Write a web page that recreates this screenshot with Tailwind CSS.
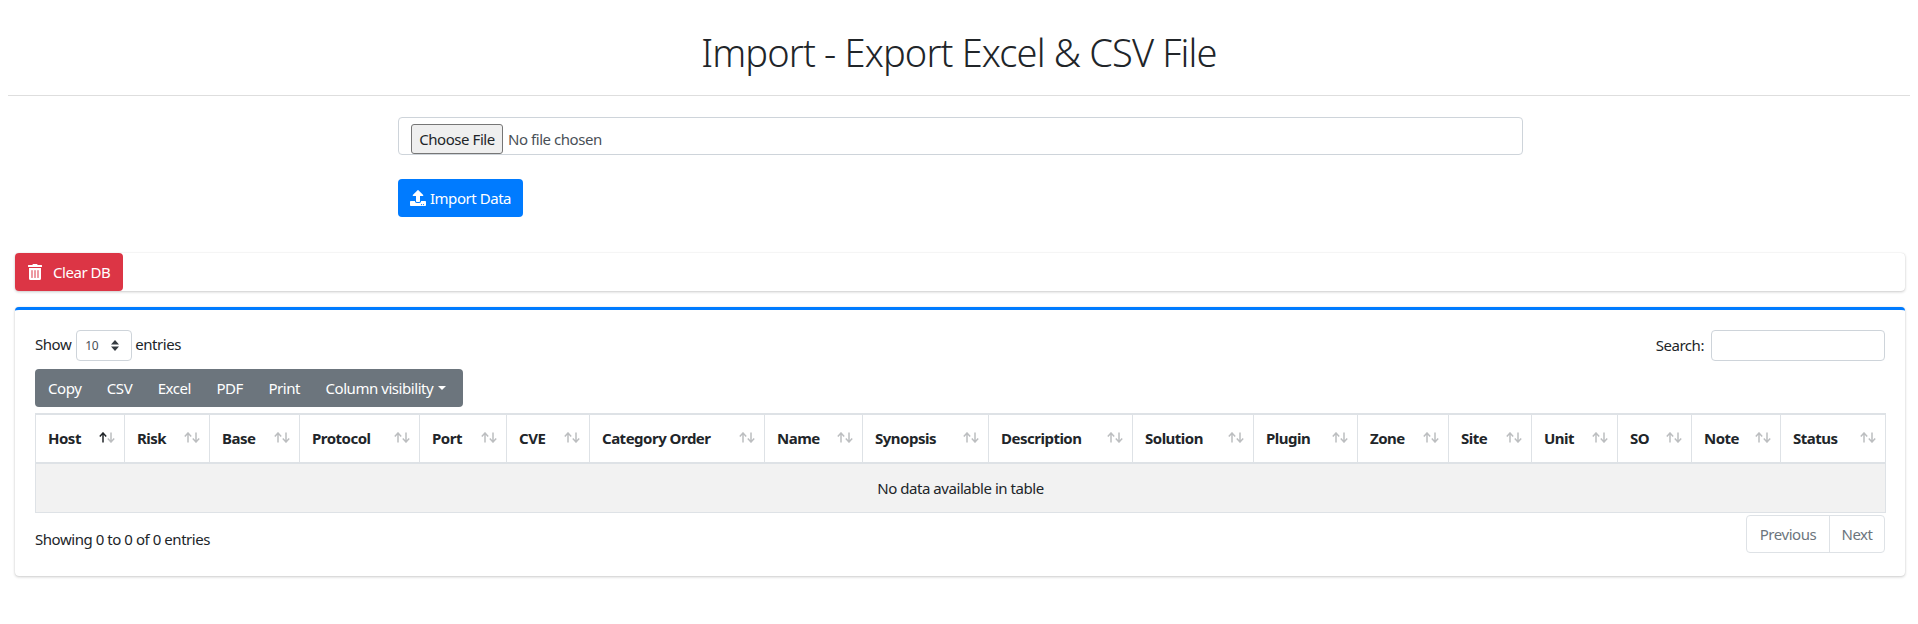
<!DOCTYPE html>
<html lang="en">
<head>
    <meta charset="UTF-8">
    <meta name="viewport" content="width=device-width, initial-scale=1.0">
    <title>Import - Export Excel &amp; CSV File</title>
    <script src="https://cdn.jsdelivr.net/npm/@tailwindcss/browser@4"></script>
</head>
<body class="bg-white text-[#212529] font-['Noto_Sans',sans-serif] text-[15px] leading-[24px] tracking-[-0.45px] h-[624px] overflow-hidden">
    <h1 class="text-center text-[38px] font-light leading-[48px] pt-[28px] pb-[19px] tracking-[-0.85px]">Import - Export Excel &amp; CSV File</h1>
    <hr class="mx-[8px] border-t border-[#dedede]">

    <!-- Import form -->
    <div class="w-[1125px] ml-[398px] mt-[21px]">
        <div class="h-[38px] border border-[#ced4da] rounded-[4px] flex items-start pt-[6px] pl-[12px]">
            <input type="file" class="text-[#495057] text-[15px] file:h-[30px] file:w-[92px] file:mr-[5px] file:bg-[#efefef] file:text-[#212529] file:border file:border-[#767676] file:rounded-[3px]">
        </div>
        <button class="mt-[24px] h-[38px] w-[125px] bg-[#007bff] text-white rounded-[4px] flex items-center justify-center gap-[4px]">
            <svg class="w-[16px] h-[16px]" viewBox="0 0 512 512" fill="currentColor"><path d="M296 384h-80c-13.3 0-24-10.7-24-24V192h-87.7c-17.8 0-26.7-21.5-14.1-34.1L242.3 5.7c7.5-7.5 19.8-7.5 27.3 0l152.2 152.2c12.6 12.6 3.7 34.1-14.1 34.1H320v168c0 13.3-10.7 24-24 24zm216-8v112c0 13.3-10.7 24-24 24H24c-13.3 0-24-10.7-24-24V376c0-13.3 10.7-24 24-24h136v8c0 30.9 25.1 56 56 56h80c30.9 0 56-25.1 56-56v-8h136c13.3 0 24 10.7 24 24zm-124 88c0-11-9-20-20-20s-20 9-20 20 9 20 20 20 20-9 20-20zm64 0c0-11-9-20-20-20s-20 9-20 20 9 20 20 20 20-9 20-20z"/></svg>
            Import Data
        </button>
    </div>

    <!-- Clear DB card -->
    <div class="ml-[15px] w-[1890px] mt-[36px] h-[38px] rounded-[4px] bg-white shadow-[0_0_1px_rgba(0,0,0,0.125),0_1px_3px_rgba(0,0,0,0.2)]">
        <button class="h-[38px] w-[108px] bg-[#dc3545] text-white rounded-[4px] flex items-center pl-[13px] gap-[11px]">
            <svg class="w-[14px] h-[16px]" viewBox="0 0 448 512" fill="currentColor"><path d="M32 464a48 48 0 0 0 48 48h288a48 48 0 0 0 48-48V128H32zm272-256a16 16 0 0 1 32 0v224a16 16 0 0 1-32 0zm-96 0a16 16 0 0 1 32 0v224a16 16 0 0 1-32 0zm-96 0a16 16 0 0 1 32 0v224a16 16 0 0 1-32 0zM432 32H312l-9.4-18.7A24 24 0 0 0 281.1 0H166.8a23.72 23.72 0 0 0-21.4 13.3L136 32H16A16 16 0 0 0 0 48v32a16 16 0 0 0 16 16h416a16 16 0 0 0 16-16V48a16 16 0 0 0-16-16z"/></svg>
            Clear DB
        </button>
    </div>

    <!-- Data table card -->
    <div class="ml-[15px] w-[1890px] mt-[16px] h-[269px] rounded-[4px] bg-white border-t-[3px] border-[#007bff] shadow-[0_0_1px_rgba(0,0,0,0.125),0_1px_3px_rgba(0,0,0,0.2)] px-[20px] pt-[20px]">
        <div class="flex justify-between items-start h-[39px]">
            <div class="flex items-start">
                <span class="pt-[2px]">Show</span>
                <div class="relative w-[56px] h-[31px] ml-[5px] mr-[3px]">
                    <select class="appearance-none w-full h-full border border-[#ced4da] rounded-[4px] pl-[8px] text-[12px] text-[#495057]">
                        <option>10</option>
                    </select>
                    <svg class="absolute right-[13px] top-[10px] w-[8px] h-[11px]" viewBox="0 0 8 11" fill="#343a40"><path d="M4 0 8 4.500H0zM4 11 0 6.500H8z"/></svg>
                </div>
                <span class="pt-[2px]">entries</span>
            </div>
            <div class="flex items-start gap-[7px]">
                <span class="pt-[3px]">Search:</span>
                <input type="text" class="w-[174px] h-[31px] border border-[#ced4da] rounded-[4px]">
            </div>
        </div>

        <div class="inline-flex h-[38px] bg-[#6c757d] text-white rounded-[4px] w-[428px] items-center pl-[13px] gap-[25.5px]">
            <span>Copy</span>
            <span>CSV</span>
            <span>Excel</span>
            <span>PDF</span>
            <span>Print</span>
            <span class="flex items-center gap-[5px]">Column visibility <i class="w-0 h-0 border-x-[4.500px] border-x-transparent border-t-[4.500px] border-t-white"></i></span>
        </div>

        <table class="table-fixed w-[1850px] mt-[6px] border-collapse border-t-2 border-[#dee2e6]">
            <thead>
                <tr class="h-[49px] font-bold text-left tracking-[-0.5px]">
                    <th class="w-[89px] border border-b-2 border-[#dee2e6] pl-[12px] pr-[9px] pb-[2px]"><div class="flex justify-between items-center">Host <svg class="w-[16px] h-[11px] shrink-0" viewBox="0 0 16 11" fill="none" stroke-width="1.500"><path stroke="#212529" d="M4 10.500V1M.8 4.500 4 1l3.200 3.500"/><path stroke="#bcbec0" d="M12 .5V10M8.800 6.500 12 10l3.200-3.500"/></svg></div></th>
                    <th class="w-[85px] border border-b-2 border-[#dee2e6] pl-[12px] pr-[9px] pb-[2px]"><div class="flex justify-between items-center">Risk <svg class="w-[16px] h-[11px] shrink-0" viewBox="0 0 16 11" fill="none" stroke="#bcbec0" stroke-width="1.500"><path d="M4 10.500V1M.8 4.500 4 1l3.200 3.500M12 .5V10M8.800 6.500 12 10l3.200-3.500"/></svg></div></th>
                    <th class="w-[90px] border border-b-2 border-[#dee2e6] pl-[12px] pr-[9px] pb-[2px]"><div class="flex justify-between items-center">Base <svg class="w-[16px] h-[11px] shrink-0" viewBox="0 0 16 11" fill="none" stroke="#bcbec0" stroke-width="1.500"><path d="M4 10.500V1M.8 4.500 4 1l3.200 3.500M12 .5V10M8.800 6.500 12 10l3.200-3.500"/></svg></div></th>
                    <th class="w-[120px] border border-b-2 border-[#dee2e6] pl-[12px] pr-[9px] pb-[2px]"><div class="flex justify-between items-center">Protocol <svg class="w-[16px] h-[11px] shrink-0" viewBox="0 0 16 11" fill="none" stroke="#bcbec0" stroke-width="1.500"><path d="M4 10.500V1M.8 4.500 4 1l3.200 3.500M12 .5V10M8.800 6.500 12 10l3.200-3.500"/></svg></div></th>
                    <th class="w-[87px] border border-b-2 border-[#dee2e6] pl-[12px] pr-[9px] pb-[2px]"><div class="flex justify-between items-center">Port <svg class="w-[16px] h-[11px] shrink-0" viewBox="0 0 16 11" fill="none" stroke="#bcbec0" stroke-width="1.500"><path d="M4 10.500V1M.8 4.500 4 1l3.200 3.500M12 .5V10M8.800 6.500 12 10l3.200-3.500"/></svg></div></th>
                    <th class="w-[83px] border border-b-2 border-[#dee2e6] pl-[12px] pr-[9px] pb-[2px]"><div class="flex justify-between items-center">CVE <svg class="w-[16px] h-[11px] shrink-0" viewBox="0 0 16 11" fill="none" stroke="#bcbec0" stroke-width="1.500"><path d="M4 10.500V1M.8 4.500 4 1l3.200 3.500M12 .5V10M8.800 6.500 12 10l3.200-3.500"/></svg></div></th>
                    <th class="w-[175px] border border-b-2 border-[#dee2e6] pl-[12px] pr-[9px] pb-[2px]"><div class="flex justify-between items-center">Category Order <svg class="w-[16px] h-[11px] shrink-0" viewBox="0 0 16 11" fill="none" stroke="#bcbec0" stroke-width="1.500"><path d="M4 10.500V1M.8 4.500 4 1l3.200 3.500M12 .5V10M8.800 6.500 12 10l3.200-3.500"/></svg></div></th>
                    <th class="w-[98px] border border-b-2 border-[#dee2e6] pl-[12px] pr-[9px] pb-[2px]"><div class="flex justify-between items-center">Name <svg class="w-[16px] h-[11px] shrink-0" viewBox="0 0 16 11" fill="none" stroke="#bcbec0" stroke-width="1.500"><path d="M4 10.500V1M.8 4.500 4 1l3.200 3.500M12 .5V10M8.800 6.500 12 10l3.200-3.500"/></svg></div></th>
                    <th class="w-[126px] border border-b-2 border-[#dee2e6] pl-[12px] pr-[9px] pb-[2px]"><div class="flex justify-between items-center">Synopsis <svg class="w-[16px] h-[11px] shrink-0" viewBox="0 0 16 11" fill="none" stroke="#bcbec0" stroke-width="1.500"><path d="M4 10.500V1M.8 4.500 4 1l3.200 3.500M12 .5V10M8.800 6.500 12 10l3.200-3.500"/></svg></div></th>
                    <th class="w-[144px] border border-b-2 border-[#dee2e6] pl-[12px] pr-[9px] pb-[2px]"><div class="flex justify-between items-center">Description <svg class="w-[16px] h-[11px] shrink-0" viewBox="0 0 16 11" fill="none" stroke="#bcbec0" stroke-width="1.500"><path d="M4 10.500V1M.8 4.500 4 1l3.200 3.500M12 .5V10M8.800 6.500 12 10l3.200-3.500"/></svg></div></th>
                    <th class="w-[121px] border border-b-2 border-[#dee2e6] pl-[12px] pr-[9px] pb-[2px]"><div class="flex justify-between items-center">Solution <svg class="w-[16px] h-[11px] shrink-0" viewBox="0 0 16 11" fill="none" stroke="#bcbec0" stroke-width="1.500"><path d="M4 10.500V1M.8 4.500 4 1l3.200 3.500M12 .5V10M8.800 6.500 12 10l3.200-3.500"/></svg></div></th>
                    <th class="w-[104px] border border-b-2 border-[#dee2e6] pl-[12px] pr-[9px] pb-[2px]"><div class="flex justify-between items-center">Plugin <svg class="w-[16px] h-[11px] shrink-0" viewBox="0 0 16 11" fill="none" stroke="#bcbec0" stroke-width="1.500"><path d="M4 10.500V1M.8 4.500 4 1l3.200 3.500M12 .5V10M8.800 6.500 12 10l3.200-3.500"/></svg></div></th>
                    <th class="w-[91px] border border-b-2 border-[#dee2e6] pl-[12px] pr-[9px] pb-[2px]"><div class="flex justify-between items-center">Zone <svg class="w-[16px] h-[11px] shrink-0" viewBox="0 0 16 11" fill="none" stroke="#bcbec0" stroke-width="1.500"><path d="M4 10.500V1M.8 4.500 4 1l3.200 3.500M12 .5V10M8.800 6.500 12 10l3.200-3.500"/></svg></div></th>
                    <th class="w-[83px] border border-b-2 border-[#dee2e6] pl-[12px] pr-[9px] pb-[2px]"><div class="flex justify-between items-center">Site <svg class="w-[16px] h-[11px] shrink-0" viewBox="0 0 16 11" fill="none" stroke="#bcbec0" stroke-width="1.500"><path d="M4 10.500V1M.8 4.500 4 1l3.200 3.500M12 .5V10M8.800 6.500 12 10l3.200-3.500"/></svg></div></th>
                    <th class="w-[86px] border border-b-2 border-[#dee2e6] pl-[12px] pr-[9px] pb-[2px]"><div class="flex justify-between items-center">Unit <svg class="w-[16px] h-[11px] shrink-0" viewBox="0 0 16 11" fill="none" stroke="#bcbec0" stroke-width="1.500"><path d="M4 10.500V1M.8 4.500 4 1l3.200 3.500M12 .5V10M8.800 6.500 12 10l3.200-3.500"/></svg></div></th>
                    <th class="w-[74px] border border-b-2 border-[#dee2e6] pl-[12px] pr-[9px] pb-[2px]"><div class="flex justify-between items-center">SO <svg class="w-[16px] h-[11px] shrink-0" viewBox="0 0 16 11" fill="none" stroke="#bcbec0" stroke-width="1.500"><path d="M4 10.500V1M.8 4.500 4 1l3.200 3.500M12 .5V10M8.800 6.500 12 10l3.200-3.500"/></svg></div></th>
                    <th class="w-[89px] border border-b-2 border-[#dee2e6] pl-[12px] pr-[9px] pb-[2px]"><div class="flex justify-between items-center">Note <svg class="w-[16px] h-[11px] shrink-0" viewBox="0 0 16 11" fill="none" stroke="#bcbec0" stroke-width="1.500"><path d="M4 10.500V1M.8 4.500 4 1l3.200 3.500M12 .5V10M8.800 6.500 12 10l3.200-3.500"/></svg></div></th>
                    <th class="w-[105px] border border-b-2 border-[#dee2e6] pl-[12px] pr-[9px] pb-[2px]"><div class="flex justify-between items-center">Status <svg class="w-[16px] h-[11px] shrink-0" viewBox="0 0 16 11" fill="none" stroke="#bcbec0" stroke-width="1.500"><path d="M4 10.500V1M.8 4.500 4 1l3.200 3.500M12 .5V10M8.800 6.500 12 10l3.200-3.500"/></svg></div></th>
                </tr>
            </thead>
            <tbody>
                <tr class="h-[49px] bg-[#f2f2f2]">
                    <td colspan="18" class="border border-[#dee2e6] text-center">No data available in table</td>
                </tr>
            </tbody>
        </table>

        <div class="flex justify-between mt-[2px]">
            <div class="pt-[12px]">Showing 0 to 0 of 0 entries</div>
            <div class="flex h-[38px] border border-[#dee2e6] rounded-[4px] text-[#6c757d]">
                <span class="w-[83px] flex items-center justify-center border-r border-[#dee2e6]">Previous</span>
                <span class="w-[54px] flex items-center justify-center">Next</span>
            </div>
        </div>
    </div>
</body>
</html>
